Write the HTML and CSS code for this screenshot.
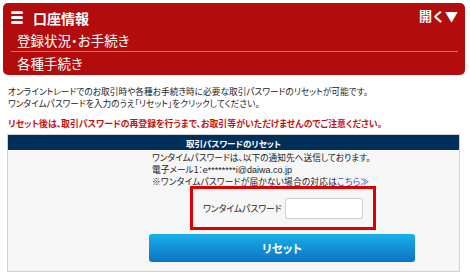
FILE: index.html
```html
<!DOCTYPE html>
<html lang="ja">
<head>
<meta charset="utf-8">
<link rel="stylesheet" href="styles.css">
</head>
<body>
<div class="menu">
  <div class="menu-top">
    <span class="menu-title"><span class="burger"><i></i><i></i><i></i></span>口座情報</span>
    <span class="menu-open">開く▼</span>
  </div>
  <div class="menu-row">登録状況・お手続き</div>
  <div class="menu-row sub">各種手続き</div>
</div>
<div class="intro">
  <p>オンライントレードでのお取引時や各種お手続き時に必要な取引パスワードのリセットが可能です。<br>ワンタイムパスワードを入力のうえ「リセット」をクリックしてください。</p>
  <p class="warn">リセット後は、取引パスワードの再登録を行うまで、お取引等がいただけませんのでご注意ください。</p>
</div>
<div class="panel">
  <div class="panel-head">取引パスワードのリセット</div>
  <div class="panel-body">
    <div class="col">
      <p class="info">ワンタイムパスワードは、以下の通知先へ送信しております。<br>電子メール1：<span class="mail">e********i@daiwa.co.jp</span><br><span class="loose">※ワンタイムパスワードが届かない場合の対応は<a href="#">こちら≫</a></span></p>
      <div class="otp-box"><label class="otp-label">ワンタイムパスワード</label><input class="otp-input" type="text"></div>
      <button class="reset-btn" type="button">リセット</button>
    </div>
  </div>
</div>
</body>
</html>
```
FILE: styles.css
```css
* { box-sizing: border-box; }
body {
  margin: 0;
  background: #fff;
  font-family: "Noto Sans CJK JP", "Noto Sans", sans-serif;
  color: #222;
}
.menu {
  margin: 3px 0 0 3px;
  width: 462px;
  height: 72px;
  background: #b20c0c;
  border-radius: 5px;
  color: #fff;
  padding: 0 7px 0 8px;
}
.menu-top {
  height: 27px;
  display: flex;
  align-items: center;
  justify-content: space-between;
  font-weight: bold;
  font-size: 14px;
  padding-top: 2px;
}
.menu-title { display: flex; align-items: center; }
.burger {
  display: flex;
  flex-direction: column;
  gap: 2px;
  width: 12px;
  margin-right: 10px;
}
.burger i {
  display: block;
  height: 3px;
  background: #fff;
  border-radius: 2px;
}
.menu-open { font-size: 13px; margin-top: -4px; }
.menu-row {
  height: 21px;
  line-height: 21px;
  font-size: 13.5px;
  padding-left: 6px;
  font-feature-settings: "palt";
}
.menu-row.sub {
  border-top: 1px solid #dc6a6a;
  height: 24px;
  line-height: 23px;
}
.intro {
  padding: 11px 8px 0;
  font-size: 8.7px;
  font-feature-settings: "palt";
}
.intro p { margin: 0; line-height: 12px; }
.intro .warn {
  margin-top: 8px;
  color: #c8100f;
  font-weight: bold;
  font-size: 8.9px;
}
.panel {
  margin: 4px 0 0 7px;
  width: 453px;
  border: 1px solid #d2d2d2;
  background: #f6f6f6;
}
.panel-head {
  background: #00305a;
  color: #fff;
  font-weight: bold;
  font-size: 8.5px;
  text-align: center;
  height: 16px;
  line-height: 16px;
  border-bottom: 1px solid #fff;
  font-feature-settings: "palt";
}
.panel-body { padding: 0 0 9px 141px; }
.col { width: 266px; }
.info {
  margin: 0;
  padding: 1px 0 0 3px;
  font-size: 8.7px;
  line-height: 12px;
  font-feature-settings: "palt";
  color: #222;
}
.info .mail {
  font-family: "Liberation Sans", sans-serif;
  font-size: 9px;
}
.info .loose { letter-spacing: 0.2px; }
.info a { color: #2050c8; text-decoration: none; }
.otp-box {
  margin: -2px 0 0 41px;
  width: 186px;
  height: 44px;
  border: 3px solid #dd0000;
  display: flex;
  align-items: center;
  padding-left: 10px;
}
.otp-label {
  font-size: 8.8px;
  font-feature-settings: "palt";
  margin-right: 3px;
  color: #222;
}
.otp-input {
  width: 78px;
  height: 21px;
  border: 1px solid #cfcfcf;
  border-radius: 2px;
  background: #fff;
  margin: 1px 0 0;
}
.reset-btn {
  display: block;
  margin-top: 4px;
  width: 266px;
  height: 28px;
  border: none;
  border-radius: 3px;
  background: linear-gradient(#1ab0ea, #0a73c6);
  color: #fff;
  font-family: inherit;
  font-weight: bold;
  font-size: 11.5px;
  font-feature-settings: "palt";
  padding: 0;
}
```
